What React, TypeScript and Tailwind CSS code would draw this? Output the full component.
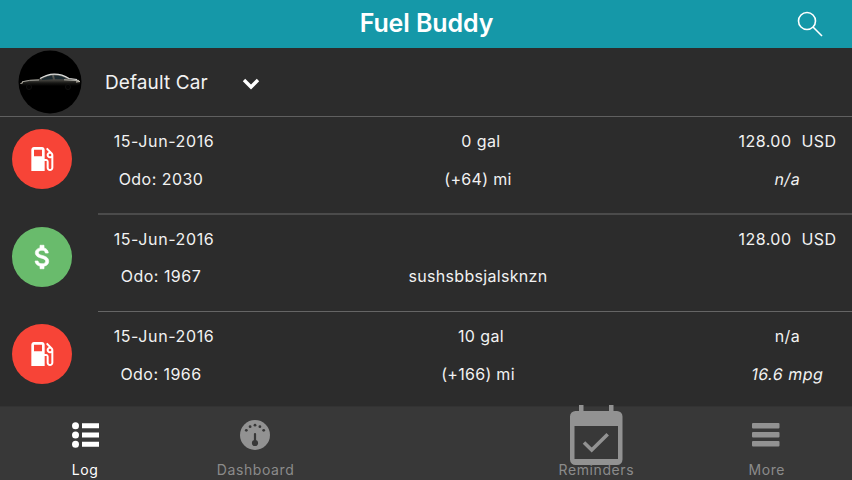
import React from "react";

type Entry = {
  kind: "fuel" | "expense";
  date: string;
  odo: string;
  amount: string;
  note: string;
  cost: string;
  economy: string;
  height: string;
  gap: string;
  line: string;
};

const entries: Entry[] = [
  { kind: "fuel", date: "15-Jun-2016", odo: "Odo: 2030", amount: "0 gal", note: "(+64) mi", cost: "128.00  USD", economy: "n/a", height: "h-[98px]", gap: "mt-[13px]", line: "h-[2px] bg-[#4b4b4b]" },
  { kind: "expense", date: "15-Jun-2016", odo: "Odo: 1967", amount: "", note: "sushsbbsjalsknzn", cost: "128.00  USD", economy: "", height: "h-[97px]", gap: "mt-[12px]", line: "h-px bg-[#656565]" },
  { kind: "fuel", date: "15-Jun-2016", odo: "Odo: 1966", amount: "10 gal", note: "(+166) mi", cost: "n/a", economy: "16.6 mpg", height: "h-[94px]", gap: "mt-[13px]", line: "h-0" },
];

function FuelIcon() {
  return (
    <svg width="32" height="32" viewBox="0 0 24 24" fill="#fff">
      <path d="M19.77 7.23l.01-.01-3.72-3.72L15 4.56l2.11 2.11c-.94.36-1.61 1.26-1.61 2.33 0 1.38 1.12 2.5 2.5 2.5.36 0 .69-.08 1-.21v7.21c0 .55-.45 1-1 1s-1-.45-1-1V14c0-1.1-.9-2-2-2h-1V5c0-1.1-.9-2-2-2H6c-1.1 0-2 .9-2 2v16h10v-7.5h1.5v5c0 1.38 1.12 2.5 2.5 2.5s2.5-1.12 2.5-2.5V9c0-.69-.28-1.32-.73-1.77zM12 10H6V5h6v5zm6 0c-.55 0-1-.45-1-1s.45-1 1-1 1 .45 1 1-.45 1-1 1z" />
    </svg>
  );
}

function DollarIcon() {
  return (
    <svg width="32" height="32" viewBox="0 0 24 24" fill="#fff" stroke="#fff" strokeWidth="0.5">
      <path d="M12.3 10.9c-2.27-.59-3-1.2-3-2.15 0-1.09 1.01-1.85 2.7-1.85 1.78 0 2.44.85 2.5 2.1h2.21c-.07-1.72-1.12-3.3-3.21-3.81V3.2h-3v1.96c-1.94.42-3.5 1.68-3.5 3.61 0 2.31 1.91 3.46 4.7 4.13 2.5.6 3 1.48 3 2.41 0 .69-.49 1.79-2.7 1.79-2.06 0-2.87-.92-2.98-2.1h-2.2c.12 2.19 1.76 3.42 3.68 3.83v1.97h3v-1.95c1.95-.37 3.5-1.5 3.5-3.55 0-2.84-2.43-3.81-4.7-4.4z" />
    </svg>
  );
}

function CarPhoto() {
  return (
    <svg width="64" height="64" viewBox="0 0 64 64">
      <defs>
        <linearGradient id="body" x1="0" x2="0" y1="0" y2="1">
          <stop offset="0" stopColor="#6c6c68" />
          <stop offset="0.5" stopColor="#45443f" />
          <stop offset="0.75" stopColor="#171715" />
          <stop offset="1" stopColor="#000" />
        </linearGradient>
      </defs>
      <circle cx="32" cy="32" r="31.5" fill="#000" />
      <path d="M2.5 34L5 31.3Q12 29.3 21 29Q28 24.2 36 24Q45 24 51 28.5L60 29.5Q63 31 62 34L58 36H4z" fill="url(#body)" />
      <path d="M24 29Q29 25.8 34 25.5L35 29.3L24 30zM36 25.5Q43 25.2 48 28.4L46 29.3H37z" fill="#1b2a30" />
      <path d="M22 28.6Q29 24.3 36 24.1Q44 24 51 28.5L59 29.5" fill="none" stroke="#dcdddb" strokeWidth="1.2" />
      <path d="M4 31.8Q11 29.8 21 30" fill="none" stroke="#a3a29b" strokeWidth="1" />
      <path d="M46 29.8L61 30.6" fill="none" stroke="#b5b4ad" strokeWidth="1" />
      <path d="M2.5 33.5L5 32.6M58 32L62 31.5" stroke="#d0cabc" />
      <g fill="#030303" stroke="#181817" strokeWidth="0.6">
        <circle cx="11" cy="37" r="2.6" />
        <circle cx="50" cy="37" r="2.6" />
      </g>
    </svg>
  );
}

function LogIcon() {
  return (
    <svg className="ml-[2px]" width="28" height="28" viewBox="0 0 28 28" fill="#fff">
      <circle cx="3.5" cy="4.7" r="3.5" /><circle cx="3.5" cy="14" r="3.5" /><circle cx="3.5" cy="23.3" r="3.5" />
      <path d="M10 2.3h17v5H10zM10 11.5h17v5H10zM10 20.7h17v5H10z" />
    </svg>
  );
}

function GaugeIcon() {
  return (
    <svg className="mr-[2px]" width="30" height="30" viewBox="0 0 30 30">
      <circle cx="15" cy="15" r="15" fill="#929292" />
      <g fill="#383838">
        <circle cx="6.3" cy="10.3" r="1.4" /><circle cx="10.1" cy="6.7" r="1.4" /><circle cx="15" cy="5.2" r="1.4" /><circle cx="19.9" cy="6.7" r="1.4" /><circle cx="23.7" cy="10.3" r="1.4" />
        <circle cx="15" cy="23" r="3.1" /><rect x="13.9" y="13" width="2.2" height="9" rx="1.1" />
      </g>
    </svg>
  );
}

function CalendarIcon() {
  return (
    <svg className="ml-px" width="54" height="60" viewBox="0 0 54 60">
      <path fill="#929292" fillRule="evenodd" d="M9 0h4.5v6H39V0h4.5v6H47a5.5 5.5 0 0 1 5.5 5.5v43A5.5 5.5 0 0 1 47 60H5.500A5.500 5.500 0 0 1 0 54.5v-43A5.5 5.5 0 0 1 5.500 6H9zM4.500 21v33h43.500V21z" />
      <path d="M14 37.5l7.700 7.500 16-15.700" fill="none" stroke="#929292" strokeWidth="3.6" />
    </svg>
  );
}

function MenuIcon() {
  return (
    <svg className="mr-[2px]" width="28" height="24" viewBox="0 0 28 24" fill="#929292">
      <rect width="27.5" height="5.5" rx="1" /><rect y="9" width="27.5" height="5.5" rx="1" /><rect y="18" width="27.5" height="5.5" rx="1" />
    </svg>
  );
}

function LogRow({ entry }: { entry: Entry }) {
  return (
    <div className={`flex flex-col text-[16px] leading-[25px] whitespace-pre ${entry.height}`}>
      <div className="flex flex-1 pt-3">
        <div className={`ml-3 flex size-[60px] shrink-0 items-center justify-center rounded-full ${entry.kind === "fuel" ? "bg-[#f74437]" : "bg-[#69bb6c]"}`}>
          {entry.kind === "fuel" ? <FuelIcon /> : <DollarIcon />}
        </div>
        <div className="ml-[22px] w-[140px] shrink-0 text-center tracking-[0.6px]">
          <p>{entry.date}</p>
          <p className={`mr-[6px] tracking-[0.46px] ${entry.gap}`}>{entry.odo}</p>
        </div>
        <div className="ml-[147px] w-[200px] shrink-0 text-center tracking-[0.4px]">
          <p className="h-[25px]">{entry.amount}</p>
          <p className={`mr-[6px] tracking-[0.3px] ${entry.gap}`}>{entry.note}</p>
        </div>
        <div className="ml-[141px] w-[131px] shrink-0 text-center tracking-[0.46px]">
          <p>{entry.cost}</p>
          <p className={`-skew-x-[10deg] tracking-[0.5px] ${entry.gap}`}>{entry.economy}</p>
        </div>
      </div>
      <div className={`ml-[98px] shrink-0 ${entry.line}`} />
    </div>
  );
}

function Tab({ label, icon, active = false }: { label: string; icon: React.ReactNode; active?: boolean }) {
  return (
    <div className={`flex w-[170.4px] flex-col items-center ${active ? "text-white" : "text-[#8b8b8b]"}`}>
      <div className="flex h-[56px] items-center justify-center">{icon}</div>
      <span className="-mt-[3px] text-[14px] leading-5 tracking-[0.6px]">{label}</span>
    </div>
  );
}

export default function App() {
  return (
    <main className="flex h-[480px] w-[852px] flex-col overflow-hidden bg-[#2c2c2c] font-['Inter','Liberation_Sans',sans-serif] text-[#f2f2f2]">
      <header className="grid h-12 shrink-0 grid-cols-[1fr_auto_1fr] items-center bg-[#1598a8] text-white">
        <span />
        <h1 className="pb-[2px] pl-px text-[25px] leading-8 font-semibold tracking-[-0.1px]">Fuel Buddy</h1>
        <svg className="mr-[28px] justify-self-end" width="28" height="28" viewBox="0 0 28 28" fill="none" stroke="#fff" strokeWidth="1.6">
          <circle cx="11" cy="11" r="8.5" /><path d="M17 17l9 9" />
        </svg>
      </header>
      <section className="flex h-[69px] shrink-0 items-center border-b border-[#606060] pl-[18px]">
        <CarPhoto />
        <span className="ml-[23px] w-[111px] pt-[2px] text-[19px] leading-7 tracking-[0.1px]">Default Car</span>
        <svg className="mt-[3px] ml-[26px]" width="18" height="12" viewBox="0 0 18 12" fill="none" stroke="#fff" strokeWidth="3.4">
          <path d="M2 2l7 7 7-7" />
        </svg>
      </section>
      <section className="flex h-[289px] shrink-0 flex-col">
        {entries.map((entry, index) => <LogRow key={index} entry={entry} />)}
      </section>
      <nav className="flex h-[74px] shrink-0 border-t border-[#333333] bg-[#383838]">
        <Tab label="Log" icon={<LogIcon />} active />
        <Tab label="Dashboard" icon={<GaugeIcon />} />
        <span className="w-[170.4px]" />
        <Tab label="Reminders" icon={<CalendarIcon />} />
        <Tab label="More" icon={<MenuIcon />} />
      </nav>
    </main>
  );
}
